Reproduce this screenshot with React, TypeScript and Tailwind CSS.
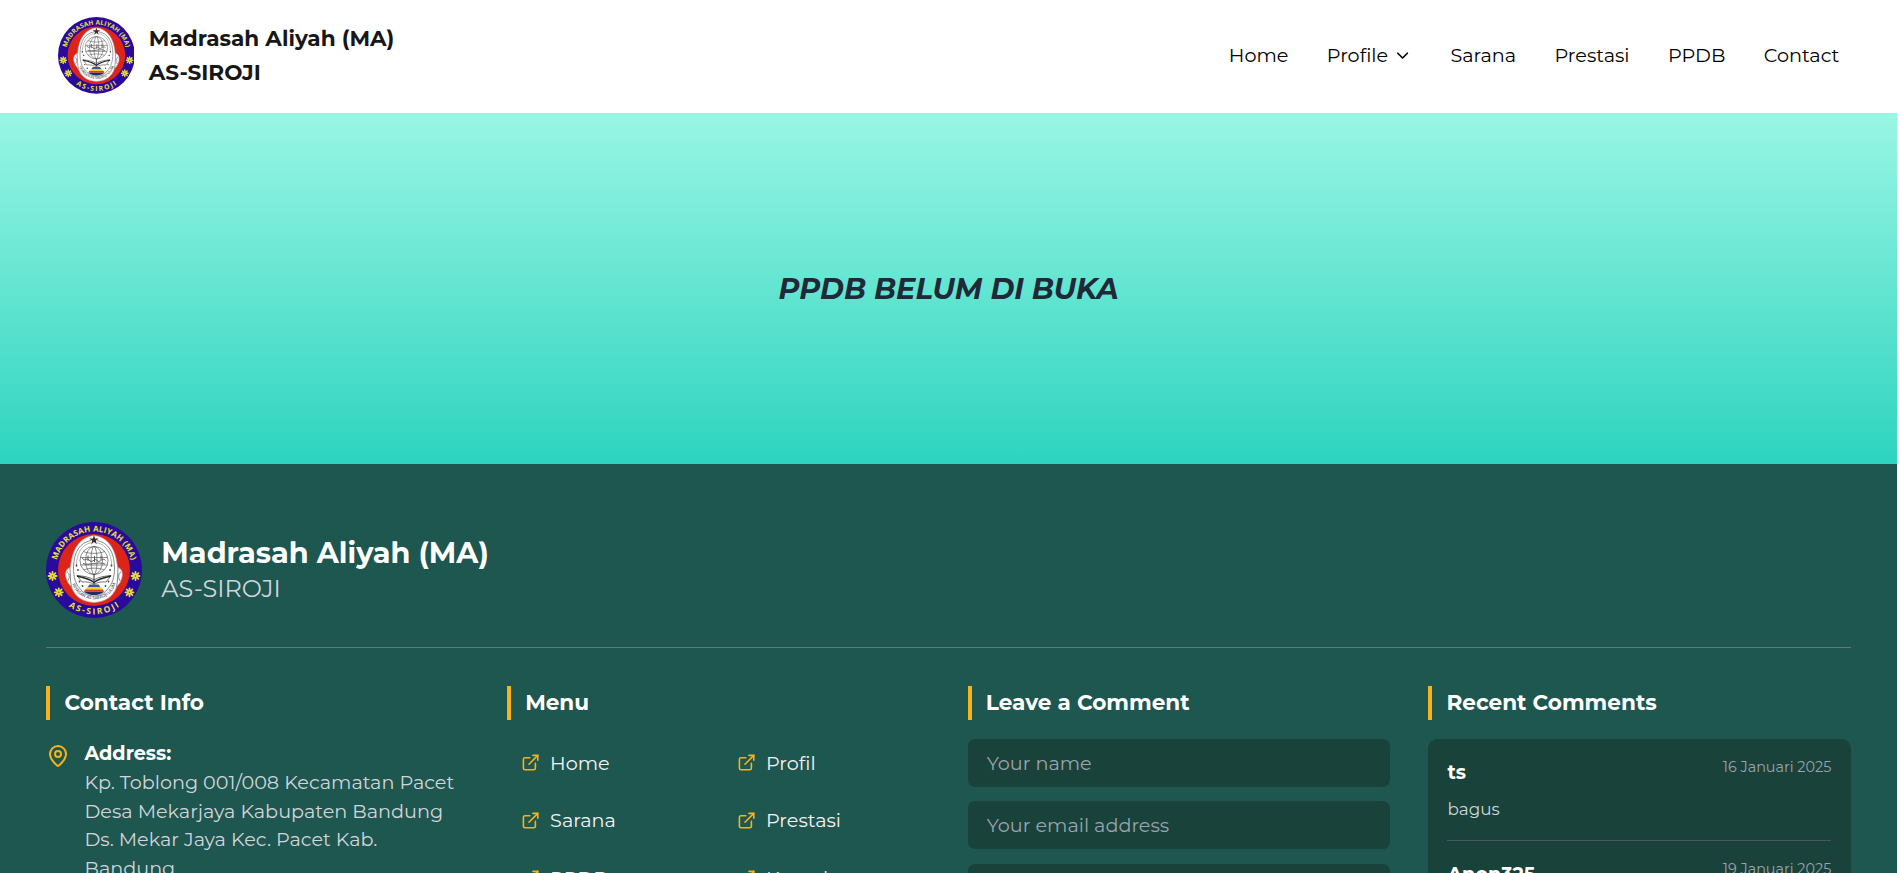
import { useId, type ReactNode } from "react";
import { ChevronDown, ExternalLink, MapPin } from "lucide-react";

const flowers: [number, number][] = [
  [6.5, 54],
  [12.8, 70.3],
  [89.5, 54],
  [83.5, 70.3],
];

function Flower({ x, y }: { x: number; y: number }) {
  return (
    <g transform={`translate(${x} ${y})`} stroke="#e6dc3c" strokeWidth="1.8" strokeLinecap="round">
      <path d="M0-4V4M-4 0H4M-2.9-2.9L2.9 2.9M2.9-2.9L-2.9 2.9" />
      <circle r="0.7" fill="#5a4a50" stroke="none" />
    </g>
  );
}

function Logo({ className }: { className: string }) {
  const id = useId();
  return (
    <svg viewBox="0 0 96 96" className={className} fontFamily="'Open Sans', sans-serif">
      <defs>
        <path id={id + "t"} d="M10.6 39.2A38.4 38.4 0 0 1 85.4 39.2" />
        <path id={id + "b"} d="M16 78.8A44.4 44.4 0 0 0 80 78.8" />
        <path id={id + "s"} d="M25.5 57.5C29 84 67 84 70.5 57.5" />
      </defs>
      <circle cx="48" cy="48" r="48" fill="#2a0a9c" />
      <circle cx="48" cy="48" r="36" fill="#dd2419" />
      <path
        d="M48 13.5C34 15 26 27 24.5 45.5C20 46 18.5 52 20.5 57C21.5 61 24 63 25.5 65C29 75 37 80 48 80.5C59 80 67 75 70.5 65C72 63 74.5 61 75.5 57C77.5 52 76 46 71.5 45.5C70 27 62 15 48 13.5Z"
        fill="#fff"
        stroke="#b9a9a9"
        strokeWidth="0.7"
      />
      <g fill="none" stroke="#6c6c6c" strokeWidth="0.8">
        <path d="M45 18.5C34 20.5 27.5 30 27.5 46C27.5 56 30 62 33.5 66C37 71 42 74 48 74C54 74 59 71 62.5 66C66 62 68.5 56 68.5 46C68.5 30 62 20.5 51 18.5" />
        <path d="M24 46C24.5 52 24 58 25.5 65M72 46C71.5 52 72 58 70.5 65M21 50C24 51 24 57 21.5 59M75 50C72 51 72 57 74.5 59" />
        <path d="M45 20.7C36 22.7 30.3 31 30.3 45M51 20.7C60 22.7 65.7 31 65.7 45" strokeWidth="0.5" />
      </g>
      <g fill="none" stroke="#5a5a5a" strokeWidth="0.7">
        <circle cx="48" cy="38.5" r="14" />
        <ellipse cx="48" cy="38.5" rx="8.5" ry="14" />
        <ellipse cx="48" cy="38.5" rx="3" ry="14" />
        <path d="M37.5 29.5C43 32 53 32 58.5 29.5M34.5 35.5H61.5M34.5 43H61.5M38 47.8C43 45.6 53 45.6 58 47.8" />
      </g>
      <path
        d="M36.5 36C38 41 41 34 44 39C47 41 49 35 51.5 39C54 41 57 35 59.5 38.5M37 41.5C43 44 52 39 59 42M42 33.5V39M48.5 34V40M55 33.5V38"
        fill="none"
        stroke="#4d4d4d"
        strokeWidth="0.9"
      />
      <path d="M48 13L49.1 16.5H52.7L49.8 18.7L50.9 22.2L48 20L45.1 22.2L46.2 18.7L43.3 16.5H46.9Z" fill="#3a2c2c" />
      <path
        d="M31 53.5C37 54 44 55 48 58C52 55 59 54 65 53.5L60 60C55 59.5 51 60.5 48 62.5C45 60.5 41 59.5 36 60Z"
        fill="#fff"
        stroke="#3b3b3b"
        strokeWidth="0.7"
      />
      <path d="M31 54C38 55.5 44 57 48 60.5C52 57 58 55.5 65 54" fill="none" stroke="#272727" strokeWidth="1.5" />
      <path d="M48 52V62" stroke="#303030" strokeWidth="1" />
      <path d="M43.5 62.5H52.5L54.5 65.2H41.5Z" fill="#3e559e" />
      <path d="M41.5 65.2H54.5L57 67.5H39Z" fill="#f0cf24" />
      <path d="M39 67.5H57L58 69.7H38Z" fill="#de3c22" />
      <path d="M38 69.7H58C55 72.2 52 73 48 73C44 73 41 72.2 38 69.7Z" fill="#252b62" />
      <g fill="#444">
        <circle cx="30.5" cy="43.5" r="0.9" />
        <circle cx="32" cy="48" r="0.9" />
        <circle cx="33.5" cy="59.5" r="0.9" />
        <circle cx="36.5" cy="64" r="0.9" />
        <circle cx="65.5" cy="43.5" r="0.9" />
        <circle cx="64" cy="48" r="0.9" />
        <circle cx="62.5" cy="59.5" r="0.9" />
        <circle cx="59.5" cy="64" r="0.9" />
      </g>
      <text fontSize="4.4" fontWeight="600" fill="#555" textAnchor="middle">
        <textPath href={"#" + id + "s"} startOffset="50%" textLength="58">YAYASAN AS SAEROJI ULUM</textPath>
      </text>
      <text fontSize="8" fontWeight="700" fill="#e8e03a" textAnchor="middle">
        <textPath href={"#" + id + "t"} startOffset="50%" textLength="101">MADRASAH ALIYAH (MA)</textPath>
      </text>
      <text fontSize="8.5" fontWeight="700" fill="#e8e03a" textAnchor="middle">
        <textPath href={"#" + id + "b"} startOffset="50%" textLength="54">AS-SIROJI</textPath>
      </text>
      {flowers.map(([x, y]) => (
        <Flower key={x} x={x} y={y} />
      ))}
    </svg>
  );
}

function Heading({ children }: { children: ReactNode }) {
  return (
    <h3 className="mb-[19.2px] flex h-[33.6px] items-center border-l-4 border-[#fbb117] pl-[14.2px] text-[21.6px] leading-[33.6px] font-bold text-white">
      {children}
    </h3>
  );
}

function MenuLink({ label }: { label: string }) {
  return (
    <a className="flex h-12 items-center gap-[9.6px] px-[14.4px] text-[19.2px] leading-[28.8px] text-gray-100">
      <ExternalLink className="size-[19.2px] text-[#fbb117]" />
      <span>{label}</span>
    </a>
  );
}

function Comment({ name, date, text }: { name: string; date: string; text: string }) {
  return (
    <div className="mb-[19.2px] border-b border-[#4b5563] pb-[19.2px]">
      <div className="mb-[9.6px] flex items-start justify-between">
        <span className="text-[19.2px] leading-[28.8px] font-bold text-white">{name}</span>
        <span className="text-[14.4px] leading-[19.2px] text-[#9ca3af]">{date}</span>
      </div>
      <p className="text-[16.8px] leading-6 text-[#d1d5db]">{text}</p>
    </div>
  );
}

const inputStyle =
  "block w-full rounded-[7.2px] bg-[#18423a] px-[19.2px] text-[19.2px] leading-[28.8px] text-white placeholder:text-[#9ca3af] outline-none";

export default function App() {
  return (
    <div className="h-[873px] w-full overflow-hidden bg-white font-['Montserrat','Inter',sans-serif]">
      <div className="w-[1897px]">
        <header className="flex h-[113px] items-center justify-between bg-white px-[57.6px] pb-[2px]">
          <div className="flex items-center gap-[14.4px]">
            <Logo className="size-[76.8px]" />
            <div className="text-[21.6px] leading-[34px] font-bold text-[#171717]">
              <p>Madrasah Aliyah (MA)</p>
              <p>AS-SIROJI</p>
            </div>
          </div>
          <nav className="flex items-center gap-[38.4px] text-[19.2px] leading-[28.8px] text-black">
            <a>Home</a>
            <a className="flex items-center gap-[4.8px]">
              Profile
              <ChevronDown className="size-[19.2px]" />
            </a>
            <a>Sarana</a>
            <a>Prestasi</a>
            <a>PPDB</a>
            <a>Contact</a>
          </nav>
        </header>

        <main className="flex h-[351px] items-center justify-center bg-linear-to-b/srgb from-[#99f6e4] to-[#2dd4bf] pt-[2px]">
          <h1 className="text-[28.8px] leading-[38.4px] font-bold text-[#1f2937] italic">PPDB BELUM DI BUKA</h1>
        </main>

        <footer className="h-[409px] overflow-hidden bg-[#1e5650] pt-[58px] pr-[46.5px] pl-[46.3px]">
          <div className="flex items-center gap-[19px] border-b border-[#6b7280] pb-[28.8px]">
            <Logo className="size-24" />
            <div>
              <h2 className="text-[28.8px] leading-[38.4px] font-bold text-white">Madrasah Aliyah (MA)</h2>
              <p className="text-2xl leading-[33.6px] text-[#d1d5db]">AS-SIROJI</p>
            </div>
          </div>

          <div className="grid grid-cols-4 gap-[38.4px] pt-[38.4px]">
            <section>
              <Heading>Contact Info</Heading>
              <div className="flex items-start gap-[14.2px] text-[19.2px] leading-[28.8px]">
                <MapPin className="mt-[4.8px] size-6 shrink-0 text-[#fbb117]" />
                <div>
                  <p className="font-bold text-white">Address:</p>
                  <p className="whitespace-nowrap text-[#d1d5db]">
                    Kp. Toblong 001/008 Kecamatan Pacet
                    <br />
                    Desa Mekarjaya Kabupaten Bandung
                    <br />
                    Ds. Mekar Jaya Kec. Pacet Kab.
                    <br />
                    Bandung
                  </p>
                </div>
              </div>
            </section>

            <section>
              <Heading>Menu</Heading>
              <div className="grid grid-cols-2 gap-[9.6px]">
                <MenuLink label="Home" />
                <MenuLink label="Profil" />
                <MenuLink label="Sarana" />
                <MenuLink label="Prestasi" />
                <MenuLink label="PPDB" />
                <MenuLink label="Kontak" />
              </div>
            </section>

            <section>
              <Heading>Leave a Comment</Heading>
              <form className="flex flex-col gap-[14.4px]">
                <input className={inputStyle + " h-12"} placeholder="Your name" />
                <input className={inputStyle + " h-12"} placeholder="Your email address" />
                <textarea className={inputStyle + " h-32 resize-none py-[9.6px]"} />
              </form>
            </section>

            <section>
              <Heading>Recent Comments</Heading>
              <div className="rounded-[9.6px] bg-[#18423a] p-[19.2px]">
                <Comment name="ts" date="16 Januari 2025" text="bagus" />
                <Comment name="Anon325" date="19 Januari 2025" text="mantap" />
              </div>
            </section>
          </div>
        </footer>
      </div>
    </div>
  );
}
